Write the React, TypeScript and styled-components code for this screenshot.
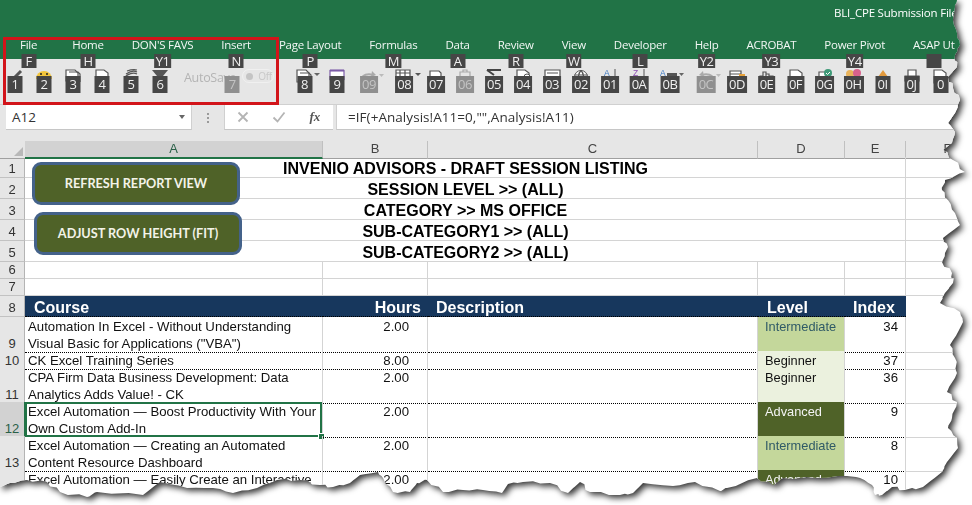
import React from "react";
import styled, { createGlobalStyle } from "styled-components";

const EXCEL_GREEN = "#217346";
const GRID_LINE = "#d4d4d4";
const SHEET_COLUMNS = "25px 298px 105px 330px 87px 61px 84px";

// torn paper outline, traced from the picture, clockwise from the top left
const EDGE = [
  [957, 0], [955, 7], [953, 20], [957, 33], [960, 45], [955, 55], [957, 67], [948, 77], [953, 88], [960, 100],
  [955, 113], [948, 123], [955, 132], [952, 143], [943, 150], [953, 160], [965, 172], [945, 180], [942, 190],
  [948, 200], [955, 213], [960, 225], [943, 238], [948, 247], [942, 262], [952, 273], [953, 283], [945, 293],
  [940, 303], [960, 312], [963, 322], [958, 332], [950, 345], [955, 358], [957, 373], [947, 392], [957, 402],
  [952, 418], [948, 428], [957, 438], [958, 448], [947, 462], [942, 472], [923, 487], [905, 490], [892, 487],
  [882, 495], [875, 495], [872, 485], [860, 478], [847, 476], [817, 478], [783, 478], [773, 485], [757, 478],
  [727, 488], [720, 491], [695, 482], [673, 486], [643, 483], [633, 493], [620, 495], [590, 492], [580, 482],
  [568, 493], [550, 483], [523, 482], [508, 484], [502, 493], [483, 490], [463, 490], [443, 492], [427, 480],
  [417, 483], [410, 492], [393, 492], [383, 478], [378, 472], [360, 475], [350, 483], [333, 487], [320, 485],
  [300, 480], [277, 480], [257, 488], [233, 493], [213, 488], [187, 488], [160, 482], [143, 495], [97, 492],
  [87, 497], [60, 492], [47, 482], [27, 480], [10, 483], [0, 487],
];

function tornPolygon() {
  const pts: string[] = ["0px 0px"];
  EDGE.forEach(([x, y], i) => {
    pts.push(`${x}px ${y}px`);
    const next = EDGE[i + 1];
    if (!next) return;
    for (let k = 1; k < 3; k++) {
      const t = k / 3;
      const wob = Math.sin(i * 12.9 + k * 78.2) * 1.2;
      pts.push(`${(x + (next[0] - x) * t + wob).toFixed(1)}px ${(y + (next[1] - y) * t - wob).toFixed(1)}px`);
    }
  });
  return `polygon(${pts.join(",")})`;
}

const GlobalStyle = createGlobalStyle`
  html, body {
    margin: 0;
    background: #fff;
    overflow: hidden;
  }
`;

const Shadow = styled.div`
  width: 972px;
  height: 505px;
  filter: drop-shadow(3px 3px 3px rgba(0, 0, 0, 0.8));
`;

const Torn = styled.div`
  position: relative;
  width: 972px;
  height: 505px;
  overflow: hidden;
  background: #fff;
  clip-path: ${tornPolygon()};
`;

const TitleBar = styled.div`
  height: 59px;
  background: ${EXCEL_GREEN};
  color: #fff;
  font-family: "Open Sans", sans-serif;
  font-size: 11.5px;
  display: flex;
  flex-direction: column;
`;

const FileName = styled.div`
  height: 33px;
  line-height: 25px;
  width: 138px;
  margin-left: auto;
  white-space: nowrap;
  overflow: hidden;
  letter-spacing: -0.2px;
`;

const TabStrip = styled.div`
  display: flex;
  gap: 28px;
  padding-left: 20px;
  height: 23px;
  line-height: 23px;
  white-space: nowrap;
`;

const Tab = styled.div<{ $mr?: number }>`
  position: relative;
  margin-right: ${(p) => p.$mr ?? 0}px;
  letter-spacing: -0.25px;
  color: #f2f7f4;
`;

const KeyTip = styled.span<{ $off?: boolean; $tall?: boolean }>`
  position: absolute;
  left: 50%;
  transform: translateX(-50%);
  top: ${(p) => (p.$tall ? "8px" : "21px")};
  min-width: 15px;
  height: ${(p) => (p.$tall ? "17px" : "14px")};
  padding: 0 2px;
  box-sizing: border-box;
  background: ${(p) => (p.$off ? "#8f8f8f" : "#464646")};
  color: ${(p) => (p.$off ? "#c4c4c4" : "#f0f0f0")};
  font-family: "Open Sans", sans-serif;
  font-size: 13px;
  letter-spacing: -0.5px;
  line-height: ${(p) => (p.$tall ? "17px" : "14px")};
  text-align: center;
  white-space: nowrap;
`;

const Toolbar = styled.div`
  height: 46px;
  box-sizing: border-box;
  background: #e6e6e6;
  padding-left: 0.5px;
  display: flex;
  align-items: flex-start;
  border-bottom: 1px solid #d0d0d0;
`;

const Slot = styled.div<{ $w?: number; $ml?: number }>`
  position: relative;
  flex: none;
  width: ${(p) => p.$w ?? 29}px;
  margin-left: ${(p) => p.$ml ?? 0}px;
  height: 30px;
  margin-top: 9px;

  & > svg {
    position: absolute;
    left: 50%;
    top: 0;
    margin-left: -9px;
    width: 18px;
    height: 18px;
    overflow: visible;
  }
`;

const AutoSave = styled.div`
  position: relative;
  flex: none;
  width: 115.5px;
  height: 30px;
  margin-top: 9px;
  padding-left: 9.5px;
  box-sizing: border-box;
  display: flex;
  align-items: flex-start;
  gap: 6px;
  font-family: "Open Sans", sans-serif;
  font-size: 12.5px;
  line-height: 19px;
  letter-spacing: -0.3px;
  color: #b4b4b4;
  white-space: nowrap;
`;

const Toggle = styled.div`
  width: 32px;
  height: 14px;
  margin-top: 1px;
  border: 1px solid #f0f0f0;
  border-radius: 8px;
  display: flex;
  align-items: center;
  gap: 5px;
  padding-left: 3px;
  box-sizing: border-box;
  font-size: 10px;
  line-height: 12px;
  color: #c8c8c8;
  &::before {
    content: "";
    width: 7px;
    height: 7px;
    border-radius: 50%;
    background: #c4c4c4;
  }
`;

const FormulaBar = styled.div`
  height: 36px;
  box-sizing: border-box;
  background: #e6e6e6;
  padding: 0 0 0 6px;
  display: flex;
  align-items: flex-start;
  font-family: "Open Sans", sans-serif;
  font-size: 13.5px;
  color: #333;
`;

const NameBox = styled.div`
  width: 186px;
  height: 25px;
  box-sizing: border-box;
  background: #fff;
  border-bottom: 1px solid #c6c6c6;
  border-right: 1px solid #d0d0d0;
  padding: 0 6px;
  display: flex;
  align-items: center;
  justify-content: space-between;
`;

const Caret = styled.span`
  width: 0;
  height: 0;
  border-left: 3.5px solid transparent;
  border-right: 3.5px solid transparent;
  border-top: 4px solid #666;
`;

const Grip = styled.div`
  width: 32px;
  height: 25px;
  flex: none;
  display: flex;
  flex-direction: column;
  align-items: center;
  justify-content: center;
  gap: 2px;
  & > i {
    width: 2px;
    height: 2px;
    background: #9a9a9a;
  }
`;

const FormulaButtons = styled.div`
  width: 109px;
  height: 25px;
  flex: none;
  box-sizing: border-box;
  background: #fff;
  border-bottom: 1px solid #c6c6c6;
  border-left: 1px solid #d0d0d0;
  display: flex;
  align-items: center;
  justify-content: space-around;
  padding: 0 1px 0 0;
  color: #b4b4b4;
`;

const FxMark = styled.span`
  font-family: "Liberation Serif", serif;
  font-style: italic;
  font-weight: 700;
  font-size: 13px;
  color: #555;
`;

const FormulaInput = styled.div`
  flex: 1;
  height: 25px;
  margin-left: 3px;
  box-sizing: border-box;
  background: #fff;
  border-bottom: 1px solid #c6c6c6;
  border-left: 1px solid #d0d0d0;
  padding-left: 11px;
  line-height: 24px;
  letter-spacing: 0.05px;
  white-space: nowrap;
`;

const Sheet = styled.div`
  font-family: "Liberation Sans", Arial, sans-serif;
  font-size: 13.2px;
  color: #111;
`;

const Row = styled.div<{ $h: number }>`
  display: grid;
  grid-template-columns: ${SHEET_COLUMNS};
  height: ${(p) => p.$h}px;
`;

const Corner = styled.div`
  background: #e6e6e6;
  position: relative;
  border-bottom: 1px solid #a0a0a0;
  &::after {
    content: "";
    position: absolute;
    right: 2px;
    bottom: 2px;
    border-left: 9px solid transparent;
    border-bottom: 9px solid #b8b8b8;
  }
`;

const ColumnHead = styled.div<{ $active?: boolean }>`
  background: ${(p) => (p.$active ? "#d2d2d2" : "#e6e6e6")};
  border-bottom: ${(p) => (p.$active ? `2px solid ${EXCEL_GREEN}` : "1px solid #a0a0a0")};
  border-right: 1px solid #c0c0c0;
  color: ${(p) => (p.$active ? "#2a6048" : "#444")};
  font-size: 13px;
  line-height: 16px;
  text-align: center;
`;

const RowHead = styled.div<{ $active?: boolean }>`
  background: ${(p) => (p.$active ? "#d2d2d2" : "#e6e6e6")};
  color: ${(p) => (p.$active ? "#2a6048" : "#333")};
  border-bottom: 1px solid #c2c2c2;
  border-right: 1px solid ${(p) => (p.$active ? EXCEL_GREEN : "#b4b4b4")};
  font-size: 13px;
  line-height: 16px;
  display: flex;
  align-items: flex-end;
  justify-content: center;
`;

const TitleCell = styled.div`
  grid-column: span 5;
  border-bottom: 1px solid ${GRID_LINE};
  border-right: 1px solid ${GRID_LINE};
  font-size: 16px;
  font-weight: 700;
  color: #000;
  line-height: 24px;
  height: 21px;
  box-sizing: border-box;
  padding-left: 1px;
  text-align: center;
`;

const Cell = styled.div<{ $dotted?: boolean; $align?: string; $pad?: string }>`
  position: relative;
  overflow: hidden;
  border-right: 1px solid ${GRID_LINE};
  border-bottom: 1px ${(p) => (p.$dotted ? "dotted #000" : `solid ${GRID_LINE}`)};
  text-align: ${(p) => p.$align ?? "left"};
  padding: ${(p) => p.$pad ?? "1px 3px 0"};
  line-height: 17px;
`;

const CourseCell = styled(Cell)<{ $selected?: boolean }>`
  overflow: visible;
  ${(p) =>
    p.$selected &&
    `
    box-shadow: inset 0 0 0 2px ${EXCEL_GREEN};
    border-bottom-color: transparent;
    &::after {
      content: "";
      position: absolute;
      right: -3px;
      bottom: -3px;
      width: 5px;
      height: 5px;
      background: ${EXCEL_GREEN};
      border: 1px solid #fff;
    }
  `}
`;

const LEVEL_COLORS: Record<string, { bg: string; fg: string }> = {
  Beginner: { bg: "#ebf1de", fg: "#111" },
  Intermediate: { bg: "#c4d79b", fg: "#2f5a66" },
  Advanced: { bg: "#4f6228", fg: "#f4f4f4" },
};

const LevelCell = styled(Cell)<{ $level: string }>`
  background: ${(p) => LEVEL_COLORS[p.$level].bg};
  color: ${(p) => LEVEL_COLORS[p.$level].fg};
  padding-left: 7px;
  font-size: 12.8px;
`;

const HeadCell = styled.div<{ $align?: string; $pad: string }>`
  background: #17375d;
  color: #fff;
  font-size: 16px;
  font-weight: 700;
  line-height: 23px;
  text-align: ${(p) => p.$align ?? "left"};
  padding: ${(p) => p.$pad};
  border-bottom: 1px dotted #000;
  overflow: hidden;
`;

const Blank = styled.div`
  border-bottom: 1px solid ${GRID_LINE};
`;

const SheetButton = styled.div<{ $left: number; $top: number }>`
  position: absolute;
  left: ${(p) => p.$left}px;
  top: ${(p) => p.$top}px;
  width: 208px;
  height: 43px;
  box-sizing: border-box;
  padding-bottom: 1px;
  background: #4f6228;
  border: 3px solid #44628a;
  border-radius: 9px;
  color: #f3f3e8;
  font-family: Lato, sans-serif;
  font-size: 12.7px;
  font-weight: 700;
  display: flex;
  align-items: center;
  justify-content: center;
`;

const RedBox = styled.div`
  position: absolute;
  left: 3px;
  top: 37px;
  width: 276px;
  height: 68px;
  box-sizing: border-box;
  border: 3px solid #d2141a;
  pointer-events: none;
`;

const S = { fill: "none", stroke: "#555", strokeWidth: 1.2 };
const G = { fill: "none", stroke: "#aaa", strokeWidth: 2 };
const DocShape = <path {...S} fill="#fff" d="M3 2h8l4 3v10H3z" />;

const ICONS: Record<string, React.ReactNode> = {
  "1": <path d="M9 9l6-6" stroke="#555" strokeWidth={3} />,
  "2": (
    <>
      <path d="M1 11a8 8 0 0 1 16 0z" fill="#f4c63c" />
      <circle cx="6" cy="6" r="1" fill="#222" />
      <circle cx="12" cy="6" r="1" fill="#222" />
    </>
  ),
  "3": (
    <>
      <path {...S} fill="#fff" d="M2 2h9l3 3v8H2z" />
      <path {...S} d="M5 4h9l2 2v8" />
    </>
  ),
  "4": DocShape,
  "5": <path {...S} d="M3 9c3-3 8-5 12-3M4 6c3-2 7-4 11-2M5 3c3-1 6-2 10-1" />,
  "6": <path d="M1 2h16l-5 6H6z" fill="#555" />,
  "8": (
    <>
      <path {...S} fill="#fff" d="M1 2h9l3 3v9H1z" />
      <path {...S} d="M4 5h9l2 2v9" />
      <path d="M18 5h6l-3 3z" fill="#666" />
    </>
  ),
  "9": (
    <>
      <rect x="2" y="2.5" width="14" height="9" fill="#fff" stroke="#7c5ca8" strokeWidth="1.2" />
      <rect x="2" y="1.5" width="14" height="2" fill="#7c5ca8" />
    </>
  ),
  "09": (
    <>
      <path {...G} d="M2 11c0-4 6-6 11-4" />
      <path d="M12 3l4 4-5 2z" fill="#aaa" />
      <path d="M19 6h5l-2.500 3z" fill="#bbb" />
    </>
  ),
  "08": (
    <>
      <path {...S} fill="#fff" d="M1 2h14v10H1zM1 5h14M5 2v10M10 2v10" />
      <path d="M20 5h6l-3 3z" fill="#555" />
    </>
  ),
  "07": <path {...S} fill="#fff" d="M3 3h9l2 2v8H3z" />,
  "06": <path {...G} strokeWidth={1.2} d="M4 4h10v10H4zM7 4V2h4v2" />,
  "05": <path d="M2 2h14M2 2l7 5" stroke="#444" strokeWidth={2} fill="none" />,
  "04": (
    <>
      {DocShape}
      <circle cx="13" cy="9" r="3" fill="#fff" stroke="#555" />
    </>
  ),
  "03": <path {...S} fill="#fff" d="M2 2h15v9H2zM4 5h11" />,
  "02": (
    <>
      <circle cx="9" cy="9" r="6.500" fill="#fff" stroke="#555" />
      <path {...S} d="M2.500 7h13M9 2.500c-3 3-3 8 0 13M9 2.500c3 3 3 8 0 13" />
    </>
  ),
  "01": (
    <>
      <text x="3" y="7.500" fontSize="8.500" fontFamily="Liberation Sans" fill="#3c78c0">A</text>
      <path d="M14 1v9" stroke="#555" />
    </>
  ),
  "0A": (
    <>
      <text x="3" y="7.500" fontSize="8.500" fontFamily="Liberation Sans" fill="#8a4fb0">Z</text>
      <path d="M14 1v9" stroke="#555" />
    </>
  ),
  "0B": (
    <>
      <text x="-1" y="7.500" fontSize="8.500" fontFamily="Liberation Sans" fill="#3c78c0">A</text>
      <rect x="6" y="5" width="10" height="4" fill="#555" />
      <path d="M18 5h5l-2.500 3z" fill="#666" />
    </>
  ),
  "0C": (
    <>
      <path {...G} d="M16 11c0-4-6-6-11-4" />
      <path d="M6 3L2 7l5 2z" fill="#aaa" />
      <path d="M19 6h5l-2.500 3z" fill="#bbb" />
    </>
  ),
  "0D": (
    <>
      <path {...S} fill="#fff" d="M2 3h11v9H2zM2 6h11" />
      <rect x="11" y="6" width="6" height="3" fill="#e8a33c" />
    </>
  ),
  "0E": <path {...S} d="M2 12V8h3V4h3v8M8 6h3v6M11 8h4v4" />,
  "0F": DocShape,
  "0G": (
    <>
      <path {...S} fill="#fff" d="M3 4h8v9H3z" />
      <circle cx="12" cy="5" r="4" fill="#3f9a78" />
      <path d="M10 5l1.500 1.500L14 4" stroke="#fff" fill="none" />
    </>
  ),
  "0H": (
    <>
      <circle cx="5" cy="6" r="4" fill="#e9b35a" />
      <circle cx="12" cy="5" r="4" fill="#d9628c" />
    </>
  ),
  "0I": <path d="M9 2l5 7H4z" fill="#e39a3c" />,
  "0J": <path {...S} fill="#fff" d="M5 2h8v6H5zM2 8h14v5H2z" />,
  "02b": <path {...S} fill="#fff" d="M2 2h8l4 3v10H2z" />,
};

const TABS: { label: string; tip: string; mr?: number }[] = [
  { label: "File", tip: "F", mr: 7 },
  { label: "Home", tip: "H" },
  { label: "DON'S FAVS", tip: "Y1" },
  { label: "Insert", tip: "N" },
  { label: "Page Layout", tip: "P" },
  { label: "Formulas", tip: "M" },
  { label: "Data", tip: "A" },
  { label: "Review", tip: "R" },
  { label: "View", tip: "W" },
  { label: "Developer", tip: "L" },
  { label: "Help", tip: "Y2" },
  { label: "ACROBAT", tip: "Y3" },
  { label: "Power Pivot", tip: "Y4" },
  { label: "ASAP Ut", tip: "" },
];

type Tool = { tip: string; icon?: string; off?: boolean; w?: number; ml?: number };

const LEFT_TOOLS: Tool[] = ["1", "2", "3", "4", "5", "6"].map((tip) => ({ tip }));

const RIGHT_TOOLS: Tool[] = [
  { tip: "8" },
  { tip: "9", w: 36 },
  { tip: "09", w: 28, off: true },
  { tip: "08", w: 34.5, ml: 4 },
  { tip: "07" },
  { tip: "06", off: true },
  { tip: "05" },
  { tip: "04" },
  { tip: "03" },
  { tip: "02" },
  { tip: "01" },
  { tip: "0A" },
  { tip: "0B", w: 33 },
  { tip: "0C", w: 39, off: true },
  { tip: "0D", w: 23 },
  { tip: "0E", ml: 3.5 },
  { tip: "0F" },
  { tip: "0G" },
  { tip: "0H" },
  { tip: "0I" },
  { tip: "0J" },
  { tip: "0", icon: "02b" },
];

const TITLES = [
  "INVENIO ADVISORS - DRAFT SESSION LISTING",
  "SESSION LEVEL >> (ALL)",
  "CATEGORY >> MS OFFICE",
  "SUB-CATEGORY1 >> (ALL)",
  "SUB-CATEGORY2 >> (ALL)",
];

const COURSES = [
  { n: 9, h: 34, lines: ["Automation In Excel - Without Understanding", 'Visual Basic for Applications ("VBA")'], hours: "2.00", level: "Intermediate", index: 34 },
  { n: 10, h: 17, lines: ["CK Excel Training Series"], hours: "8.00", level: "Beginner", index: 37 },
  { n: 11, h: 34, lines: ["CPA Firm Data Business Development: Data", "Analytics Adds Value! - CK"], hours: "2.00", level: "Beginner", index: 36 },
  { n: 12, h: 34, lines: ["Excel Automation — Boost Productivity With Your", "Own Custom Add-In"], hours: "2.00", level: "Advanced", index: 9 },
  { n: 13, h: 34, lines: ["Excel Automation — Creating an Automated", "Content Resource Dashboard"], hours: "2.00", level: "Intermediate", index: 8 },
  { n: 14, h: 34, lines: ["Excel Automation — Easily Create an Interactive"], hours: "2.00", level: "Advanced", index: 10 },
];

function ToolSlot({ tool }: { tool: Tool }) {
  return (
    <Slot $w={tool.w} $ml={tool.ml}>
      <svg viewBox="0 0 18 18">{ICONS[tool.icon ?? tool.tip]}</svg>
      <KeyTip $tall $off={tool.off}>{tool.tip}</KeyTip>
    </Slot>
  );
}

function EmptyRow({ n }: { n: number }) {
  return (
    <Row $h={17}>
      <RowHead>{n}</RowHead>
      <Cell />
      <Cell />
      <Cell />
      <Cell />
      <Cell />
      <Blank />
    </Row>
  );
}

export default function App() {
  return (
    <>
      <GlobalStyle />
      <Shadow>
        <Torn>
          <TitleBar>
            <FileName>BLI_CPE Submission File</FileName>
            <TabStrip>
              {TABS.map((t) => (
                <Tab key={t.label} $mr={t.mr}>
                  {t.label}
                  <KeyTip>{t.tip}</KeyTip>
                </Tab>
              ))}
            </TabStrip>
          </TitleBar>

          <Toolbar>
            {LEFT_TOOLS.map((t) => (
              <ToolSlot key={t.tip} tool={t} />
            ))}
            <AutoSave>
              AutoSave
              <Toggle>Off</Toggle>
              <KeyTip $tall $off>7</KeyTip>
            </AutoSave>
            {RIGHT_TOOLS.map((t, i) => (
              <ToolSlot key={i} tool={t} />
            ))}
          </Toolbar>

          <FormulaBar>
            <NameBox>
              A12
              <Caret />
            </NameBox>
            <Grip>
              <i />
              <i />
              <i />
            </Grip>
            <FormulaButtons>
              <svg width="12" height="12" viewBox="0 0 12 12">
                <path d="M1.500 1.500l9 9M10.500 1.500l-9 9" stroke="#b4b4b4" strokeWidth="1.800" />
              </svg>
              <svg width="14" height="12" viewBox="0 0 14 12">
                <path d="M1.500 6.500l4 4 7-9" fill="none" stroke="#b4b4b4" strokeWidth="1.800" />
              </svg>
              <FxMark>fx</FxMark>
            </FormulaButtons>
            <FormulaInput>=IF(+Analysis!A11=0,"",Analysis!A11)</FormulaInput>
          </FormulaBar>

          <Sheet>
            <Row $h={16}>
              <Corner />
              <ColumnHead $active>A</ColumnHead>
              <ColumnHead>B</ColumnHead>
              <ColumnHead>C</ColumnHead>
              <ColumnHead>D</ColumnHead>
              <ColumnHead>E</ColumnHead>
              <ColumnHead>F</ColumnHead>
            </Row>

            {TITLES.map((title, i) => (
              <Row $h={21} key={title}>
                <RowHead>{i + 1}</RowHead>
                <TitleCell>{title}</TitleCell>
                <Blank />
              </Row>
            ))}

            <EmptyRow n={6} />
            <EmptyRow n={7} />

            <Row $h={21}>
              <RowHead>8</RowHead>
              <HeadCell $pad="0 9px">Course</HeadCell>
              <HeadCell $pad="0 7px" $align="right">Hours</HeadCell>
              <HeadCell $pad="0 8px">Description</HeadCell>
              <HeadCell $pad="0 9px">Level</HeadCell>
              <HeadCell $pad="0 8px">Index</HeadCell>
              <div />
            </Row>

            {COURSES.map((c) => (
              <Row $h={c.h} key={c.n}>
                <RowHead $active={c.n === 12}>{c.n}</RowHead>
                <CourseCell $dotted $selected={c.n === 12}>
                  {c.lines.map((line) => (
                    <div key={line}>{line}</div>
                  ))}
                </CourseCell>
                <Cell $dotted $align="right" $pad="1px 18px 0 0">{c.hours}</Cell>
                <Cell $dotted />
                <LevelCell $dotted $level={c.level}>{c.level}</LevelCell>
                <Cell $dotted $align="right" $pad="1px 7px 0 0">{c.index}</Cell>
                <Blank />
              </Row>
            ))}
          </Sheet>

          <SheetButton $left={32} $top={162}>REFRESH REPORT VIEW</SheetButton>
          <SheetButton $left={34} $top={212}>ADJUST ROW HEIGHT (FIT)</SheetButton>
          <RedBox />
        </Torn>
      </Shadow>
    </>
  );
}
